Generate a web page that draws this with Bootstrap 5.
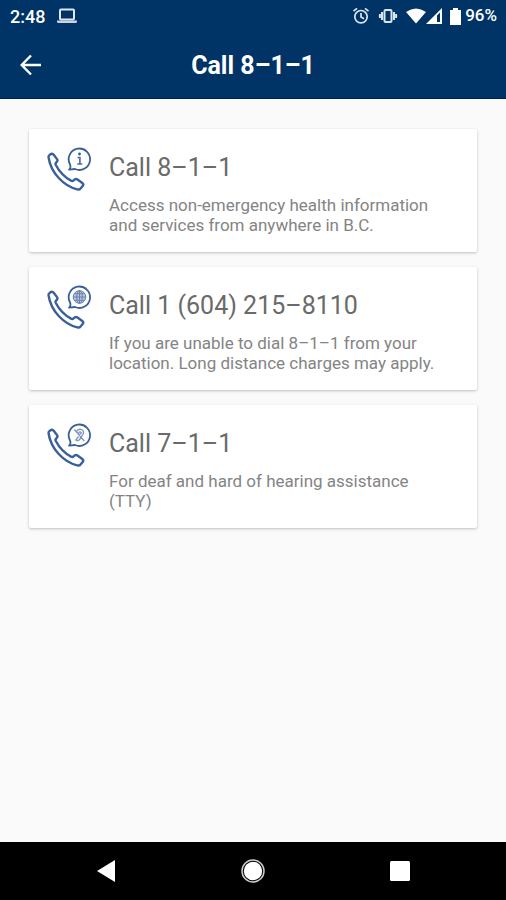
<!DOCTYPE html>
<html lang="en">
<head>
<meta charset="utf-8">
<meta name="viewport" content="width=device-width, initial-scale=1">
<title>Call 8–1–1</title>
<link href="https://cdn.jsdelivr.net/npm/bootstrap@5.3.0/dist/css/bootstrap.min.css" rel="stylesheet">
<style>
  body { font-family: Roboto, sans-serif; background: #fafafa; }
  svg { display: block; flex: none; }
  .app-top { background: #003366; border-bottom: 1px solid #00204a; }
  .status-bar { height: 32px; font-size: 17px; font-weight: 500; padding: 0 9px 0 10px; }
  .status-bar .clock { font-size: 18px; }
  .title-bar { height: 66px; padding: 0 19px; }
  .title-bar h1 { font-size: 25px; font-weight: 700; line-height: 32px; padding-top: 2px; }
  .side { width: 24px; }
  .call-list { padding: 30px 29px; gap: 15px; }
  .call-card { min-height: 123px; padding: 17px 32px 16px 17px; gap: 17px; border-radius: 2px; background: #fff;
    box-shadow: 0 1px 3px rgba(0,0,0,.24); }
  .call-card h2 { font-size: 25px; font-weight: 400; line-height: 32px; color: #6a6a6a; margin: 6px 0 11px; }
  .call-card p { font-size: 17px; font-weight: 400; line-height: 20px; color: #848484; }
  .system-nav { height: 58px; background: #000; padding: 0 33px; }
</style>
</head>
<body class="min-vh-100 d-flex flex-column">
<svg class="d-none" aria-hidden="true">
  <symbol id="phone" viewBox="0 0 44 44" overflow="visible">
    <g fill="none" stroke="#3a6099" stroke-linejoin="round" stroke-linecap="round">
      <path stroke-width="2.4" d="M1.500 10C1.200 8.800 2.100 8.300 3.200 7.500Q5.300 6 6.900 8L10.200 12.400Q11 14 9.500 15.200Q8 16.400 8.800 18C12.500 25 18 30.400 24 33.600Q25.700 34.400 26.700 33.200Q28.500 31.200 30.500 32.500L35.300 36Q37 37.500 35.700 39L33.500 41.500Q32.500 42.900 30.300 42.400C17.500 39.500 3.800 26.500 1.500 10Z"/>
      <path stroke-width="1.8" d="M22.800 17A10.700 10.700 0 1 1 28 22L22 22.700Q24.500 20.500 22.800 17Z"/>
    </g>
  </symbol>
</svg>

<header class="app-top text-white">
  <div class="status-bar d-flex align-items-center justify-content-between">
    <div class="d-flex align-items-center gap-2">
      <span class="clock">2:48</span>
      <svg class="ms-1" width="20" height="16" viewBox="0 0 20 16" aria-hidden="true"><rect x="3" y="1.500" width="14" height="10" rx="1" fill="none" stroke="#e2e7f0" stroke-width="2"/><path d="M0 12.500h20v1q0 1.500-1.500 1.500h-17Q0 15 0 13.500Z" fill="#cbd4e2"/></svg>
    </div>
    <div class="d-flex align-items-center">
      <svg class="me-2" width="18" height="18" viewBox="0 0 18 18" fill="none" stroke="#dce4f0" stroke-width="1.700" aria-hidden="true"><circle cx="9" cy="9.700" r="6.200"/><path d="M1.500 4.200 5 1.300M13 1.300l3.500 2.900M9 6v4l3 1.800"/></svg>
      <svg class="me-2" width="20" height="16" viewBox="0 0 20 16" fill="none" stroke="#dce4f0" stroke-width="2" aria-hidden="true"><rect x="6.500" y="2" width="7" height="12" rx="1"/><path d="M4 4v8M16 4v8M1.900 6v4M18.100 6v4"/></svg>
      <svg width="20" height="16" viewBox="0 0 20 16" aria-hidden="true"><path fill="#fff" d="M0 4Q10-3 20 4L10 15.500Z"/></svg>
      <svg class="me-2" width="16" height="16" viewBox="0 0 16 16" aria-hidden="true"><path fill="#fff" fill-rule="evenodd" d="M0 16 16 0v16ZM11 7.500v6.500h3V4.500Z"/></svg>
      <svg class="me-1" width="11" height="17" viewBox="0 0 11 17" aria-hidden="true"><path fill="#fff" d="M3 0h5v2h3v15H0V2h3Z"/></svg>
      <span>96%</span>
    </div>
  </div>
  <div class="title-bar d-flex align-items-center justify-content-between">
    <button type="button" class="side btn p-0 border-0 text-white" aria-label="Back">
      <svg width="24" height="24" viewBox="0 0 24 24" fill="none" stroke="#fff" stroke-width="2.400" aria-hidden="true"><path d="M22 12H3M12 2.500 2.700 12l9.300 9.500"/></svg>
    </button>
    <h1 class="m-0">Call 8–1–1</h1>
    <span class="side"></span>
  </div>
</header>

<main class="call-list flex-grow-1 d-flex flex-column">
  <a href="tel:811" class="call-card d-flex align-items-start text-decoration-none">
    <svg width="46" height="46" viewBox="-1 -1 46 46" aria-hidden="true"><use href="#phone" width="44" height="44"/><path d="M30.500 10.500h2.400v6.200M30.300 17h5" fill="none" stroke="#4a6a9d" stroke-width="1.600"/><circle cx="32.500" cy="7" r="1.400" fill="#2f5791"/></svg>
    <div><h2>Call 8–1–1</h2><p class="m-0">Access non-emergency health information and services from anywhere in B.C.</p></div>
  </a>
  <a href="tel:16042158110" class="call-card d-flex align-items-start text-decoration-none">
    <svg width="46" height="46" viewBox="-1 -1 46 46" aria-hidden="true"><use href="#phone" width="44" height="44"/><g fill="#b9c6dc" stroke="#6883af"><circle cx="32.500" cy="12" r="6.300"/><ellipse cx="32.500" cy="12" rx="2.800" ry="6.300"/><path d="M32.500 5.700v12.600M26.200 12h12.600M27.300 8.700h10.400M27.300 15.300h10.400"/></g></svg>
    <div><h2>Call 1 (604) 215–8110</h2><p class="m-0">If you are unable to dial 8–1–1 from your location. Long distance charges may apply.</p></div>
  </a>
  <a href="tel:711" class="call-card d-flex align-items-start text-decoration-none">
    <svg width="46" height="46" viewBox="-1 -1 46 46" aria-hidden="true"><use href="#phone" width="44" height="44"/><g fill="none" stroke="#7d94ba" stroke-width="1.300"><path d="M29.500 8.500Q31 5.500 34.500 6.500Q37.500 8 36 11.500L33.500 14.500Q33 18 29.500 17.700M31.500 10Q33 8 34.300 9.800L32 12.500M27.300 6.500l10 11.500M28.500 17.500l3-4"/></g></svg>
    <div><h2>Call 7–1–1</h2><p class="m-0">For deaf and hard of hearing assistance (TTY)</p></div>
  </a>
</main>

<nav class="system-nav d-flex align-items-center" aria-label="System">
  <button type="button" class="btn p-0 border-0 flex-fill d-flex justify-content-center" aria-label="Back"><svg width="20" height="22" viewBox="0 0 20 22"><path fill="#fff" d="M1 11 19 0v22Z"/></svg></button>
  <button type="button" class="btn p-0 border-0 flex-fill d-flex justify-content-center" aria-label="Home"><svg width="24" height="24" viewBox="0 0 24 24"><circle cx="12" cy="12" r="11" fill="none" stroke="#ccc" stroke-width="1.500"/><circle cx="12" cy="12" r="9.200" fill="#fff"/></svg></button>
  <button type="button" class="btn p-0 border-0 flex-fill d-flex justify-content-center" aria-label="Recent apps"><svg width="20" height="20" viewBox="0 0 20 20"><rect width="20" height="20" rx="1.500" fill="#fff"/></svg></button>
</nav>
<script src="https://cdn.jsdelivr.net/npm/bootstrap@5.3.0/dist/js/bootstrap.bundle.min.js"></script>
</body>
</html>
